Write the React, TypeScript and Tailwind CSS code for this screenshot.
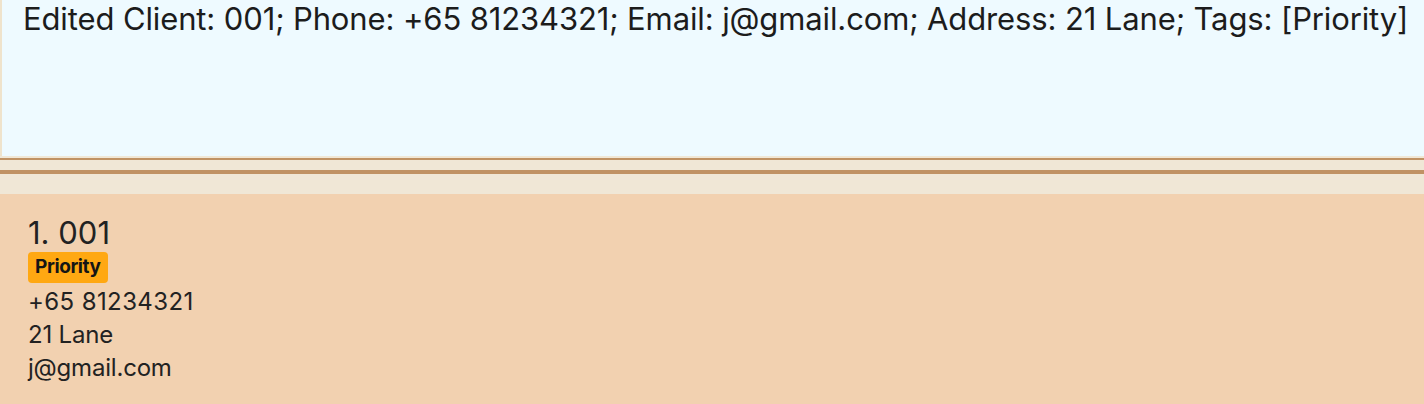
import React from 'react';

const client = {
    index: 1,
    name: '001',
    tags: ['Priority'],
    phone: '+65 81234321',
    address: '21 Lane',
    email: 'j@gmail.com',
};

const App: React.FC = () => {
    return (
        <div className="w-[1424px] h-[404px] flex flex-col bg-[#f0e7d6] font-['Inter',sans-serif] text-[#1c1c1c] overflow-hidden">
            {/* Result display */}
            <div className="h-[156px] shrink-0 bg-[#eefaff] border-l-2 border-[#efe3cc] pl-[21px]">
                <p className="text-[31px] leading-[38px] whitespace-nowrap tracking-[-0.12px]">
                    Edited Client: 001; Phone: +65 81234321; Email: j@gmail.com; Address: 21 Lane; Tags: [Priority]
                </p>
            </div>

            {/* Splitter */}
            <div className="h-[2px] shrink-0" />
            <div className="h-[2px] shrink-0 bg-[#c09264]" />
            <div className="h-[10px] shrink-0" />
            <div className="h-[4px] shrink-0 bg-[#c09264]" />
            <div className="h-[20px] shrink-0" />

            {/* Client card */}
            <div className="flex-1 bg-[#f2d1b0] pl-[28px] pt-[20px]">
                <div className="text-[31px] leading-[38px] text-[#222]">
                    {client.index}. {client.name}
                </div>
                <div className="flex gap-2">
                    {client.tags.map((tag) => (
                        <span
                            key={tag}
                            className="bg-[#ffa812] rounded-[4px] px-[7px] h-[31px] flex items-center text-[19px] font-bold text-[#151515] tracking-[-0.4px]"
                        >
                            {tag}
                        </span>
                    ))}
                </div>
                <div className="mt-[2px] text-[24px] leading-[33px] text-[#222] tracking-[-0.2px]">
                    <div className="tracking-[0.4px]">{client.phone}</div>
                    <div>{client.address}</div>
                    <div>{client.email}</div>
                </div>
            </div>
        </div>
    );
};

export default App;
